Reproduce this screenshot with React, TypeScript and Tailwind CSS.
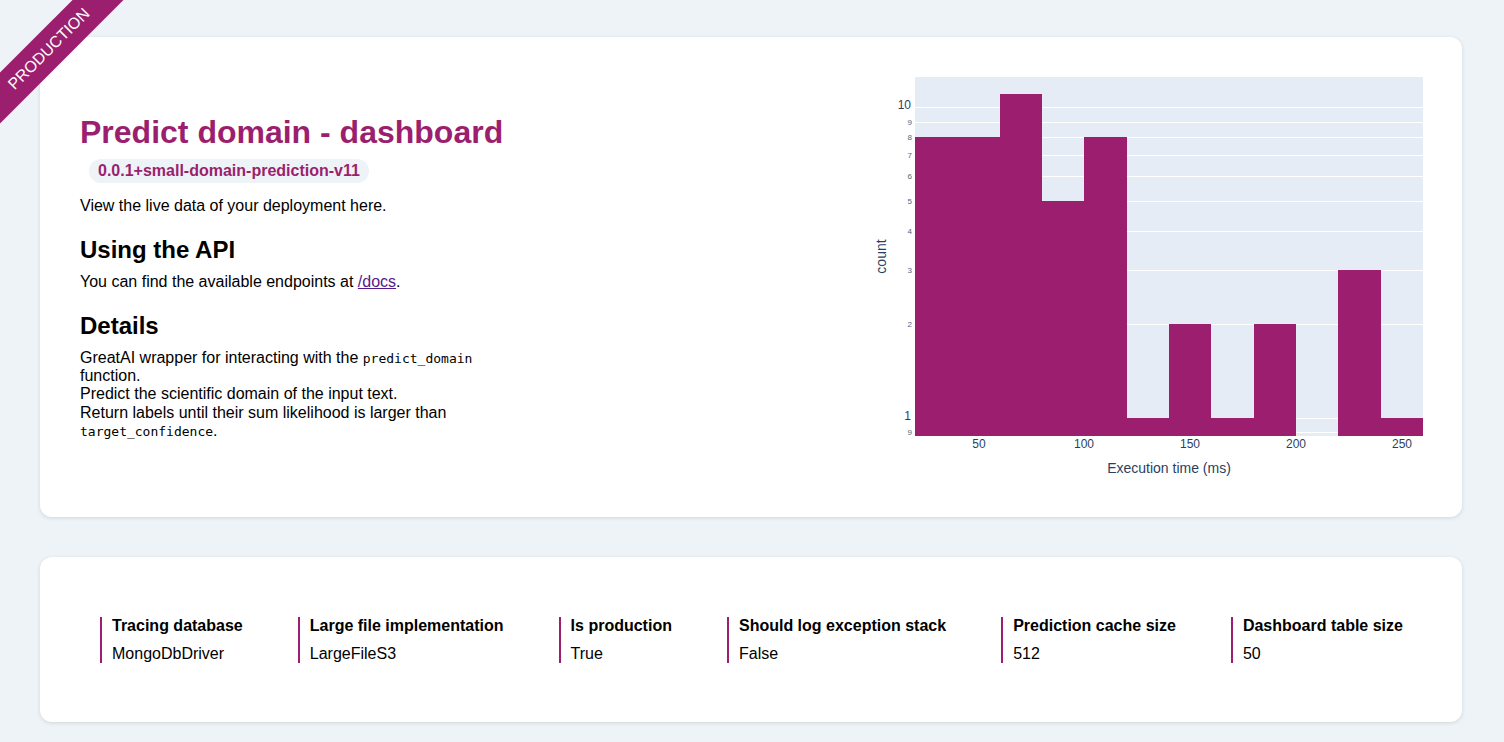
import React from "react"

const PURPLE = "#9b1f6e"

const counts = [8, 8, 11, 5, 8, 1, 2, 1, 2, 0, 3, 1]

// plot area inside the 600x480 svg
const X0 = 53
const X1 = 561
const Y0 = 40
const Y1 = 399
const xs = (u: number) => Math.round(X0 + ((u - 20) * (X1 - X0)) / 240)
const ys = (v: number) => 381 - 310.7 * Math.log10(v)

const yTicks = [
  { v: 0.9, label: "9", major: false },
  { v: 1, label: "1", major: true },
  { v: 2, label: "2", major: false },
  { v: 3, label: "3", major: false },
  { v: 4, label: "4", major: false },
  { v: 5, label: "5", major: false },
  { v: 6, label: "6", major: false },
  { v: 7, label: "7", major: false },
  { v: 8, label: "8", major: false },
  { v: 9, label: "9", major: false },
  { v: 10, label: "10", major: true },
]

function Histogram() {
  return (
    <svg width={600} height={480} className="block shrink-0" style={{ fontFamily: '"Liberation Sans", Arial, sans-serif' }}>
      <rect x={X0} y={Y0} width={X1 - X0} height={Y1 - Y0} fill="#e5ecf6" />
      {yTicks.map((t) => (
        <line key={t.v} x1={X0} x2={X1} y1={Math.round(ys(t.v)) + 0.5} y2={Math.round(ys(t.v)) + 0.5} stroke="#ffffff" strokeWidth={1} />
      ))}
      {counts.map((c, i) =>
        c > 0 ? (
          <rect
            key={i}
            x={xs(20 + i * 20)}
            y={Math.round(ys(c))}
            width={xs(40 + i * 20) - xs(20 + i * 20)}
            height={Y1 - Math.round(ys(c))}
            fill={PURPLE}
            shapeRendering="crispEdges"
          />
        ) : null
      )}
      {yTicks.map((t) =>
        t.major ? (
          <text key={"l" + t.v} x={49} y={ys(t.v) + 2} textAnchor="end" fontSize={12} fill="#2a3f5f">
            {t.label}
          </text>
        ) : (
          <text key={"l" + t.v} x={50} y={ys(t.v) + 3} textAnchor="end" fontSize={8} fill="#506784">
            {t.label}
          </text>
        )
      )}
      {[50, 100, 150, 200, 250].map((u) => (
        <text key={u} x={xs(u)} y={411} textAnchor="middle" fontSize={12} fill="#2a3f5f">
          {u}
        </text>
      ))}
      <text x={(X0 + X1) / 2} y={436} textAnchor="middle" fontSize={14} fill="#2a3f5f">
        Execution time (ms)
      </text>
      <text x={24} y={219.5} textAnchor="middle" fontSize={14} fill="#2a3f5f" transform="rotate(-90 24 219.5)">
        count
      </text>
    </svg>
  )
}

const config = [
  { name: "Tracing database", value: "MongoDbDriver" },
  { name: "Large file implementation", value: "LargeFileS3" },
  { name: "Is production", value: "True" },
  { name: "Should log exception stack", value: "False" },
  { name: "Prediction cache size", value: "512" },
  { name: "Dashboard table size", value: "50" },
]

function Code({ children }: { children: React.ReactNode }) {
  return <code className="font-['DejaVu_Sans_Mono',monospace] text-[13px] leading-none">{children}</code>
}

export default function App() {
  return (
    <div className="relative min-h-[742px] bg-[#edf3f6] pl-10 pr-[42px] pt-[37px] pb-5 font-['Liberation_Sans',Arial,sans-serif] text-black">
      <div className="absolute left-0 top-0 h-[130px] w-[130px] overflow-hidden">
        <div className="absolute left-[-61px] top-[31px] flex h-[36px] w-[220px] -rotate-45 items-center justify-center bg-[#9b1f6e] text-[16px] leading-none text-white">
          PRODUCTION
        </div>
      </div>

      <div className="flex items-center justify-between rounded-xl bg-white shadow-[0_1px_4px_rgba(0,0,0,0.12)]">
        <div className="pl-10">
          <h1 className="whitespace-nowrap text-[32px] font-bold leading-[37px] text-[#9b1f6e]">Predict domain - dashboard</h1>
          <span className="ml-[9px] mt-[8px] inline-block rounded-full bg-[#edf3f6] px-[9px] text-[16px] font-bold leading-[24px] text-[#9b1f6e]">
            0.0.1+small-domain-prediction-v11
          </span>
          <p className="mt-[14px] text-[16px] leading-[18px]">View the live data of your deployment here.</p>
          <h2 className="mt-[21px] text-[24px] font-bold leading-[28px]">Using the API</h2>
          <p className="mt-[9px] text-[16px] leading-[18px]">
            You can find the available endpoints at{" "}
            <a href="#" className="text-[#551a8b] underline">
              /docs
            </a>
            .
          </p>
          <h2 className="mt-[21px] text-[24px] font-bold leading-[28px]">Details</h2>
          <p className="mt-[9px] w-[420px] text-[16px] leading-[18.2px]">
            GreatAI wrapper for interacting with the <Code>predict_domain</Code> function.
            <br />
            Predict the scientific domain of the input text.
            <br />
            Return labels until their sum likelihood is larger than <Code>target_confidence</Code>.
          </p>
        </div>
        <Histogram />
      </div>

      <div className="mt-10 flex h-[165px] items-center justify-between rounded-xl bg-white pl-[60px] pr-[59px] shadow-[0_1px_4px_rgba(0,0,0,0.12)]">
        {config.map((c) => (
          <div key={c.name} className="border-l-2 border-[#9b1f6e] pl-[10px] text-[16px] leading-[18px]">
            <div className="font-bold">{c.name}</div>
            <div className="mt-[10px]">{c.value}</div>
          </div>
        ))}
      </div>
    </div>
  )
}
